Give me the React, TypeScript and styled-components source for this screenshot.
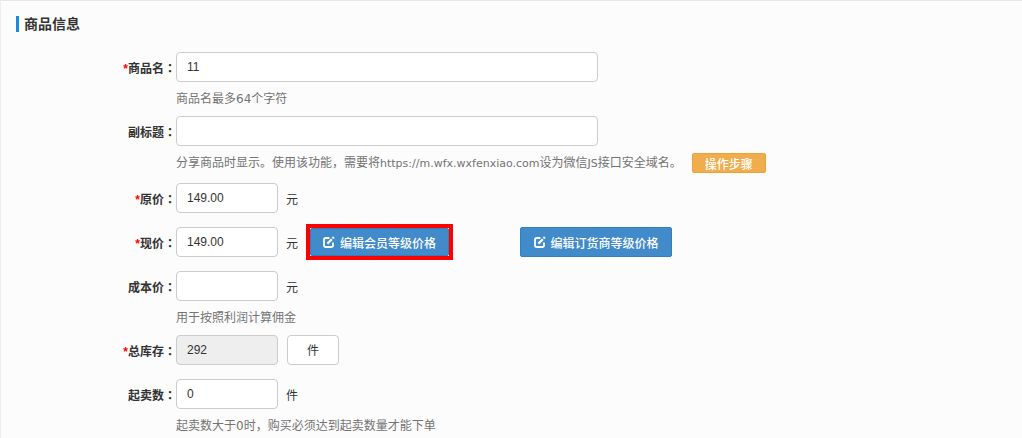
import React from 'react';
import styled, { createGlobalStyle } from 'styled-components';

const GlobalStyle = createGlobalStyle`
  html, body {
    margin: 0;
    padding: 0;
    background: #fcfcfc;
    overflow: hidden;
  }
  body {
    font-family: "Liberation Sans", "Noto Sans CJK SC", sans-serif;
    font-size: 12px;
    color: #333;
  }
`;

const Panel = styled.section`
  height: 438px;
  box-sizing: border-box;
  border-top: 1px solid #e6e6e6;
  border-left: 1px solid #eeeeee;
  padding: 15px 0 0 15px;
  overflow: hidden;
`;

const SectionTitle = styled.h3`
  margin: 0 0 20px;
  height: 16px;
  line-height: 16px;
  padding-left: 5px;
  border-left: 3px solid #1a8bdc;
  font-size: 14px;
  font-weight: 700;
  color: #333;
`;

const Row = styled.div<{ $tight?: boolean }>`
  display: flex;
  align-items: flex-start;
  height: 30px;
  margin-left: -16px;
  margin-bottom: ${({ $tight }) => ($tight ? '0' : '14px')};
`;

const Label = styled.label`
  width: 176px;
  flex-shrink: 0;
  text-align: right;
  line-height: 32px;
  font-weight: 700;
  font-size: 12px;
  color: #333;
`;

const Star = styled.span`
  color: #f00;
`;

const Colon = styled.span`
  font-family: "Noto Sans CJK TC", sans-serif;
`;

const Input = styled.input<{ $wide?: boolean }>`
  box-sizing: border-box;
  width: ${({ $wide }) => ($wide ? '422px' : '102px')};
  height: 30px;
  padding: 0 10px 1px;
  border: 1px solid #ccc;
  border-radius: 4px;
  background: #fff;
  font: 12px "Liberation Sans", "Noto Sans CJK SC", sans-serif;
  color: #333;
  outline: none;

  &:disabled {
    background: #eeeeee;
    opacity: 1;
  }
`;

const Unit = styled.span`
  margin-left: 8px;
  line-height: 34px;
  color: #333;
`;

const UnitBox = styled.span`
  box-sizing: border-box;
  width: 52px;
  height: 30px;
  margin-left: 9px;
  border: 1px solid #ccc;
  border-radius: 4px;
  background: #fff;
  text-align: center;
  line-height: 30px;
  color: #333;
`;

const Help = styled.div<{ $after?: number }>`
  display: flex;
  align-items: center;
  height: 20px;
  margin: 7px 0 ${({ $after }) => $after ?? 7}px 160px;
  font-family: "DejaVu Sans", "Noto Sans CJK SC", sans-serif;
  color: #737373;
  line-height: 20px;
  white-space: pre;
`;

const Url = styled.span`
  font-size: 11px;
`;

const StepsButton = styled.button`
  height: 20px;
  width: 74px;
  margin-left: 10px;
  padding: 0;
  border: 1px solid #eea236;
  border-radius: 2px;
  background: #f0ad4e;
  color: #fff;
  font: 500 12px "Liberation Sans", "Noto Sans CJK SC", sans-serif;
`;

const Outlined = styled.span`
  display: inline-flex;
  align-self: flex-start;
  margin-left: 8px;
  margin-top: -3px;
  border-style: solid;
  border-color: #f00;
  border-width: 4px 4px 4px 4px;
`;

const EditButton = styled.button<{ $gap?: number; $width: number; $height?: number }>`
  display: inline-flex;
  align-items: center;
  justify-content: center;
  gap: 5px;
  box-sizing: border-box;
  width: ${({ $width }) => $width}px;
  height: ${({ $height }) => $height ?? 30}px;
  margin-left: ${({ $gap }) => $gap ?? 0}px;
  padding: 0;
  border: 1px solid #357ebd;
  border-radius: 2px;
  background: #428bca;
  color: #fff;
  font: 500 12px "Liberation Sans", "Noto Sans CJK SC", sans-serif;
`;

const EditIcon = () => (
  <svg width="12" height="12" viewBox="0 0 12 12" fill="none" stroke="#fff" strokeWidth="1.8">
    <path d="M6.4 2H2.8C1.8 2 1 2.8 1 3.8v5.4C1 10.2 1.8 11 2.8 11h5.4c1 0 1.8-.8 1.8-1.8V6.4" />
    <path d="M4.4 7.6 8.8 3.2" strokeWidth="2.2" />
    <path d="M10 .6 11.4 2 10.4 3 9 1.6Z" fill="#fff" strokeWidth="0.4" />
  </svg>
);

export default function App() {
  return (
    <>
      <GlobalStyle />
      <Panel>
        <SectionTitle>商品信息</SectionTitle>

        <Row $tight>
          <Label><Star>*</Star>商品名<Colon>：</Colon></Label>
          <Input $wide defaultValue="11" />
        </Row>
        <Help>商品名最多64个字符</Help>

        <Row $tight>
          <Label>副标题<Colon>：</Colon></Label>
          <Input $wide />
        </Row>
        <Help $after={10}>
          <span>分享商品时显示。使用该功能，需要将<Url>https://m.wfx.wxfenxiao.com</Url>设为微信<Url>JS</Url>接口安全域名。</span>
          <StepsButton>操作步骤</StepsButton>
        </Help>

        <Row>
          <Label><Star>*</Star>原价<Colon>：</Colon></Label>
          <Input defaultValue="149.00" />
          <Unit>元</Unit>
        </Row>

        <Row>
          <Label><Star>*</Star>现价<Colon>：</Colon></Label>
          <Input defaultValue="149.00" />
          <Unit>元</Unit>
          <Outlined>
            <EditButton $width={139} $height={28}><EditIcon />编辑会员等级价格</EditButton>
          </Outlined>
          <EditButton $gap={67} $width={152}><EditIcon />编辑订货商等级价格</EditButton>
        </Row>

        <Row $tight>
          <Label>成本价<Colon>：</Colon></Label>
          <Input />
          <Unit>元</Unit>
        </Row>
        <Help>用于按照利润计算佣金</Help>

        <Row>
          <Label><Star>*</Star>总库存<Colon>：</Colon></Label>
          <Input disabled defaultValue="292" />
          <UnitBox>件</UnitBox>
        </Row>

        <Row $tight>
          <Label>起卖数<Colon>：</Colon></Label>
          <Input defaultValue="0" />
          <Unit>件</Unit>
        </Row>
        <Help>起卖数大于0时，购买必须达到起卖数量才能下单</Help>
      </Panel>
    </>
  );
}
